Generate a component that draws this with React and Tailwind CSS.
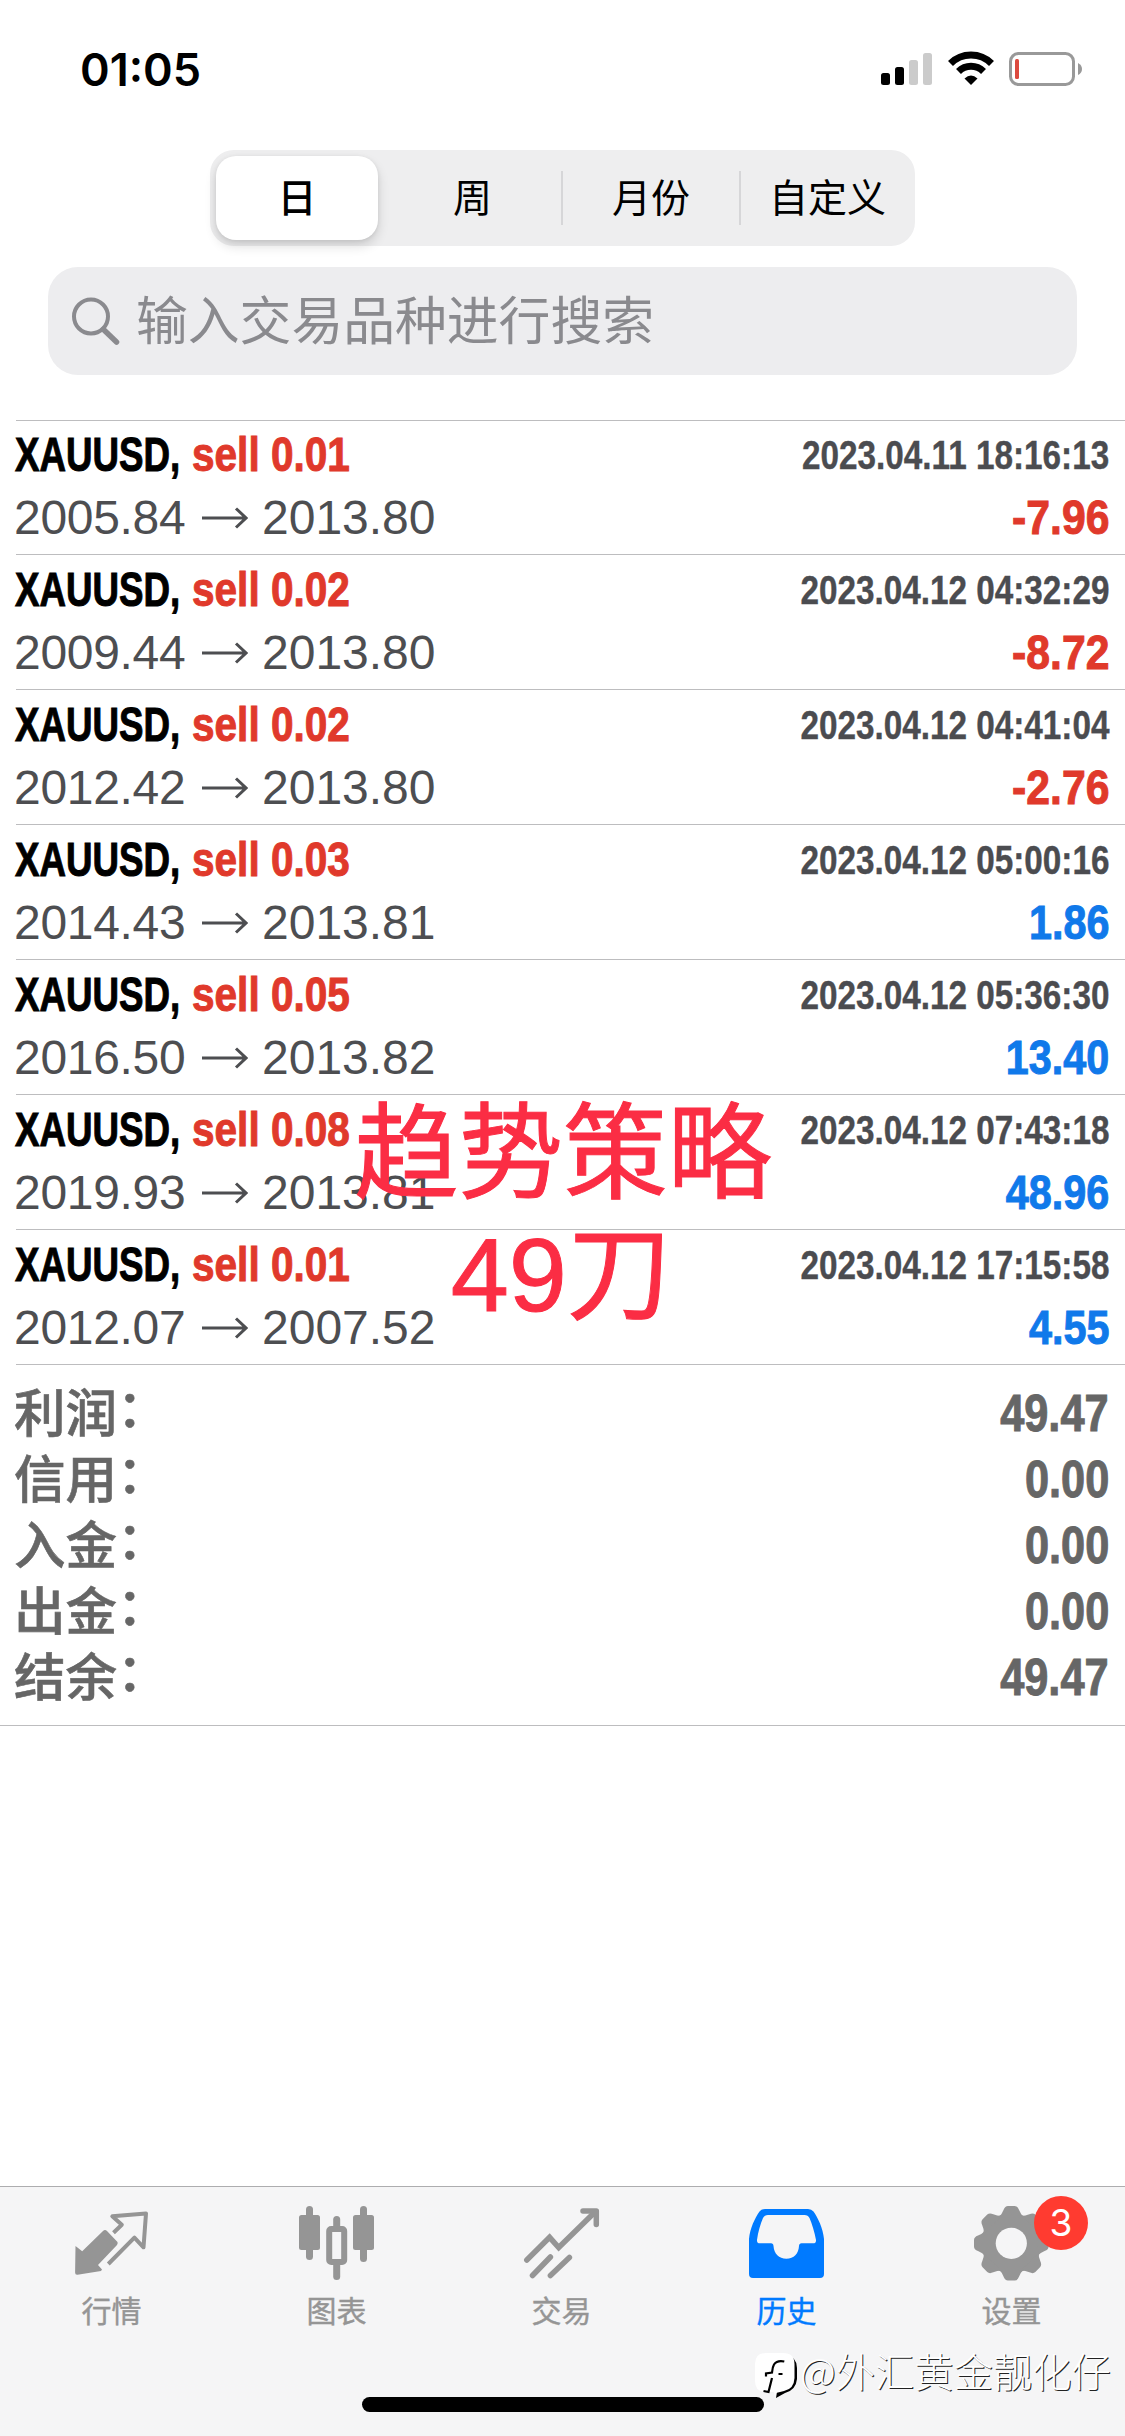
const deals = [
    { volume: "0.01", open: "2005.84", close: "2013.80", time: "2023.04.11 18:16:13", profit: "-7.96" },
    { volume: "0.02", open: "2009.44", close: "2013.80", time: "2023.04.12 04:32:29", profit: "-8.72" },
    { volume: "0.02", open: "2012.42", close: "2013.80", time: "2023.04.12 04:41:04", profit: "-2.76" },
    { volume: "0.03", open: "2014.43", close: "2013.81", time: "2023.04.12 05:00:16", profit: "1.86" },
    { volume: "0.05", open: "2016.50", close: "2013.82", time: "2023.04.12 05:36:30", profit: "13.40" },
    { volume: "0.08", open: "2019.93", close: "2013.81", time: "2023.04.12 07:43:18", profit: "48.96" },
    { volume: "0.01", open: "2012.07", close: "2007.52", time: "2023.04.12 17:15:58", profit: "4.55" },
];

const totals = [
    ["利润", "49.47"],
    ["信用", "0.00"],
    ["入金", "0.00"],
    ["出金", "0.00"],
    ["结余", "49.47"],
];

const StatusBar = () => (
    <div className="flex h-[150px] items-start justify-between pl-[80px] pr-[42px] pt-[50px]">
        <span className="font-['Inter',sans-serif] text-[45px] font-semibold leading-[40px]">01:05</span>
        <div className="flex items-start">
            <svg className="h-[40px] w-[52px]" viewBox="0 0 52 40">
                <rect x="1" y="23" width="9" height="12" rx="2.5" />
                <rect x="15" y="17" width="9" height="18" rx="2.5" />
                <rect x="29" y="10" width="9" height="25" rx="2.5" fill="#cbcbcb" />
                <rect x="43" y="3" width="9" height="32" rx="2.5" fill="#cbcbcb" />
            </svg>
            <svg className="ml-[15px] h-[40px] w-[48px]" viewBox="0 0 48 40" fill="none" stroke="#000" strokeWidth="7">
                <path d="M3.5 13.5 A29 29 0 0 1 44.5 13.5" />
                <path d="M11.5 21.5 A17.8 17.8 0 0 1 36.5 21.5" />
                <path d="M17.5 28.5 Q24 22.5 30.5 28.5 L24 35 Z" fill="#000" stroke="none" />
            </svg>
            <svg className="ml-[12px] h-[40px] w-[76px]" viewBox="0 0 76 40">
                <rect x="3.5" y="3.5" width="63" height="31" rx="8" fill="none" stroke="#999" strokeWidth="3" />
                <rect x="8" y="9" width="4" height="20" rx="1.5" fill="#dc4a3f" />
                <path d="M71 13 Q75 15 75 19 Q75 23 71 25 Z" fill="#999" />
            </svg>
        </div>
    </div>
);

const PeriodSwitch = () => (
    <div className="mx-auto flex h-[96px] w-[705px] items-center rounded-[24px] bg-[#eeeeef] pl-[6px] font-['Noto_Sans_CJK_SC',sans-serif] text-[39px]">
        <button className="h-[84px] w-[162px] rounded-[20px] bg-white pb-[5px] font-medium shadow-[0_6px_12px_rgba(0,0,0,0.14),0_1px_4px_rgba(0,0,0,0.08)]">日</button>
        <button className="w-[183px] pb-[5px] pl-[6px]">周</button>
        <div className="h-[54px] w-[2px] bg-[#d6d6d8]" />
        <button className="w-[176px] pb-[5px]">月份</button>
        <div className="h-[54px] w-[2px] bg-[#d6d6d8]" />
        <button className="w-[173px] pb-[5px]">自定义</button>
    </div>
);

const SearchBox = () => (
    <div className="mx-[48px] mt-[21px] flex h-[108px] items-center rounded-[30px] bg-[#ededef] pl-[22px] font-['Noto_Sans_CJK_SC',sans-serif] text-[#8a8a8e]">
        <svg className="h-[50px] w-[50px]" viewBox="0 0 50 50" fill="none" stroke="currentColor" strokeWidth="4">
            <circle cx="21" cy="20.5" r="17" />
            <path d="M33.5 33.5 L46.5 46" strokeWidth="5.5" strokeLinecap="round" />
        </svg>
        <span className="ml-[16px] pb-[6px] text-[51.8px] leading-[80px]">输入交易品种进行搜索</span>
    </div>
);

const Deal = ({ deal }) => (
    <div className="h-[135px] border-b border-[#bdbdbf] pr-[16px] pt-[2px] first:h-[134px] first:pt-px">
        <div className="-ml-px flex h-[66px] items-center justify-between whitespace-nowrap font-bold">
            <div className="flex text-[48px] leading-[60px]">
                <span className="w-[177px] origin-left scale-x-[0.765] [-webkit-text-stroke:1px]">XAUUSD,</span>
                <span className="origin-left scale-x-[0.845] text-[#e0392b] [-webkit-text-stroke:1px]">sell {deal.volume}</span>
            </div>
            <span className="origin-right scale-x-[0.832] text-[40px] text-[#4b4c50] [-webkit-text-stroke:0.4px]">{deal.time}</span>
        </div>
        <div className="-ml-[2px] flex h-[60px] items-center justify-between whitespace-nowrap text-[48px] leading-[60px]">
            <div className="flex items-center text-[#4d4e51]">
                <span className="w-[188px] tracking-[-0.3px]">{deal.open}</span>
                <svg className="h-[24px] w-[46px]" viewBox="0 0 46 24" fill="none" stroke="currentColor" strokeWidth="3">
                    <path d="M0 12 H44 M34 2.5 L44 12 L34 21.5" />
                </svg>
                <span className="ml-[14px]">{deal.close}</span>
            </div>
            <span
                className={
                    deal.profit.startsWith("-")
                        ? "origin-right scale-x-[0.89] font-bold text-[#e0392b] [-webkit-text-stroke:1px]"
                        : "origin-right scale-x-[0.86] font-bold text-[#1079ea] [-webkit-text-stroke:1px]"
                }
            >
                {deal.profit}
            </span>
        </div>
    </div>
);

const Summary = () => (
    <div className="border-b border-[#bdbdbf] px-[16px] py-[15px] text-[#666]">
        {totals.map(([label, value]) => (
            <div key={label} className="-ml-[2px] flex h-[66px] items-center justify-between">
                <span className="pb-[6px] font-['Noto_Sans_CJK_SC',sans-serif] text-[51.5px] font-medium leading-[60px] [-webkit-text-stroke:0.6px]">
                    {label}
                    <span className="inline-block -translate-y-[5px]">：</span>
                </span>
                <span className="origin-right scale-x-[0.85] pt-[2px] text-[51px] font-bold leading-[60px] [-webkit-text-stroke:1px]">{value}</span>
            </div>
        ))}
    </div>
);

const QuotesIcon = () => (
    <svg className="h-[80px] w-[81px]" viewBox="0 0 81 80">
        <path
            d="M3.5 42 L10.2 47.3 L31 27 Q33 25 35 27 L45.5 38 Q46 39.5 45 41 L26 61 L30 65.5 L29 67 L5.5 70.7 Q3.1 71 3.1 68.5 Z"
            fill="currentColor"
        />
        <path
            d="M41.5 28.7 L49.8 20.7 L40.3 12.3 L74 9.5 L71.5 43.3 L62.4 33.7 L36.3 60"
            fill="none"
            stroke="currentColor"
            strokeWidth="4"
            strokeLinejoin="round"
        />
    </svg>
);

const ChartIcon = () => (
    <svg className="h-[80px] w-[81px]" viewBox="0 0 81 80" fill="currentColor">
        <rect x="2" y="11" width="21" height="35" rx="2.5" />
        <rect x="9" y="2" width="7" height="54" rx="3.5" />
        <rect x="56" y="11" width="21" height="35" rx="2.5" />
        <rect x="63" y="2" width="7" height="56" rx="3.5" />
        <rect x="36.2" y="12" width="7" height="16" rx="3.5" />
        <rect x="36.2" y="56" width="7" height="20" rx="3.5" />
        <rect x="32.2" y="25" width="15" height="33" rx="2" fill="none" stroke="currentColor" strokeWidth="6" />
    </svg>
);

const TradeIcon = () => (
    <svg className="h-[80px] w-[81px]" viewBox="0 0 81 80" fill="none" stroke="currentColor" strokeWidth="5.5">
        <path d="M4.8 56 L27.6 33.3 L36.7 43.5 L73 8" strokeLinecap="round" />
        <path d="M61 7 H74.3 V20.5" strokeLinecap="round" strokeLinejoin="round" />
        <path d="M28.4 53 L10.5 71.5 M47.4 53.5 L28.4 71.5" strokeLinecap="round" />
    </svg>
);

const HistoryIcon = () => (
    <svg className="h-[80px] w-[81px]" viewBox="0 0 81 80" fill="currentColor">
        <path
            fillRule="evenodd"
            d="M2 35 C3 24 8 14 12.5 7.5 Q14.5 5 18 5 H61 Q64.5 5 66.5 7.5 C71 14 76 24 77 35 V70 Q77 74 73 74 H6 Q2 74 2 70 Z
               M21 11 Q17.5 11 16 14 C13.5 20 11 28 10 36 Q9.8 39.3 13 39.3 H24 Q26.3 39.3 26.5 42 C27 50 32 54.7 39.3 54.7 C47 54.7 51.5 50 52 42 Q52.2 39.3 54.5 39.3 H66 Q69.2 39.3 69 36 C67.5 28 65 20 62.5 14 Q61 11 57.5 11 Z"
        />
    </svg>
);

const teeth = [0, 45, 90, 135, 180, 225, 270, 315];

const SettingsIcon = () => (
    <svg className="h-[80px] w-[81px]" viewBox="0 0 81 80" fill="currentColor">
        <circle cx="39.3" cy="39.3" r="30" />
        {teeth.map((angle) => (
            <path
                key={angle}
                d="M27 13 Q30 10 31.5 6 Q33 2 36 2 H42.6 Q45.6 2 47.1 6 Q48.6 10 51.6 13 Z"
                transform={`rotate(${angle} 39.3 39.3)`}
            />
        ))}
        <circle cx="39.3" cy="39.3" r="15.6" fill="#f5f5f6" />
    </svg>
);

const tabs = [
    { label: "行情", Icon: QuotesIcon },
    { label: "图表", Icon: ChartIcon },
    { label: "交易", Icon: TradeIcon },
    { label: "历史", Icon: HistoryIcon, active: true },
    { label: "设置", Icon: SettingsIcon, badge: "3" },
];

const TabBar = () => (
    <nav className="mt-auto h-[250px] border-t border-[#adadaf] bg-[#f5f5f6] pt-[17px]">
        <div className="flex">
            {tabs.map(({ label, Icon, active, badge }) => (
                <div
                    key={label}
                    className={
                        active
                            ? "relative flex w-[225px] flex-col items-center text-[#007aff]"
                            : "relative flex w-[225px] flex-col items-center text-[#959595]"
                    }
                >
                    <Icon />
                    <span className="mt-[7px] pr-[2px] font-['Noto_Sans_CJK_SC',sans-serif] text-[30px] leading-[36px] [-webkit-text-stroke:0.4px]">
                        {label}
                    </span>
                    {badge && (
                        <span className="absolute left-[134px] top-[-8px] h-[54px] w-[54px] rounded-full bg-[#ff3b30] text-center font-['Inter',sans-serif] text-[37px] leading-[53px] text-white">
                            {badge}
                        </span>
                    )}
                </div>
            ))}
        </div>
        <div className="ml-[362px] mt-[70px] h-[15px] w-[402px] rounded-full bg-black" />
    </nav>
);

// Caption the author put over the list
const Caption = () => (
    <div className="absolute left-[343px] top-[1093px] w-[440px] text-center font-['Liberation_Sans','Noto_Sans_CJK_SC',sans-serif] text-[104.5px] leading-[122px] text-[#fb2d44] [-webkit-text-stroke:1px]">
        <div>趋势策略</div>
        <div className="-mt-px pr-[4px]">49刀</div>
    </div>
);

const Watermark = () => (
    <div className="absolute left-[755px] top-[2351px] flex items-start text-white">
        <svg className="h-[48px] w-[46px]" viewBox="0 0 46 48">
            <path d="M12 4 H31 Q42 6 42 17 V28 Q41 39 30 42 L21 47 L22 41 Z" fill="#000" />
            <path d="M11 2 H28 Q39.5 2 39.5 13 V27 Q39 38 29 40 L21 42 L20 46 L19 41 H11 Q0 41 0 30 V13 Q0 2 11 2 Z" fill="#fff" />
            <path
                d="M29.3 10.5 Q22 9 19 13.500 Q17.500 16 17 21.500 L11 22.500 V25.500 M17 27 L13.500 41 L8.500 40 M23.500 23 H27.500"
                fill="none"
                stroke="#000"
                strokeWidth="2.200"
            />
        </svg>
        <span className="-mt-[5px] -ml-px whitespace-nowrap font-['Noto_Sans_CJK_SC',sans-serif] text-[39.3px] font-light leading-[48px] [text-shadow:1px_1px_0_#222]">
            @外汇黄金靓化仔
        </span>
    </div>
);

const App = () => (
    <div className="relative flex h-[2436px] w-[1125px] flex-col overflow-hidden bg-white font-['Liberation_Sans',sans-serif] text-black">
        <StatusBar />
        <PeriodSwitch />
        <SearchBox />
        <div className="ml-[16px] mt-[45px] border-t border-[#bdbdbf]">
            {deals.map((deal) => (
                <Deal key={deal.time} deal={deal} />
            ))}
        </div>
        <Summary />
        <TabBar />
        <Caption />
        <Watermark />
    </div>
);

export default App;
